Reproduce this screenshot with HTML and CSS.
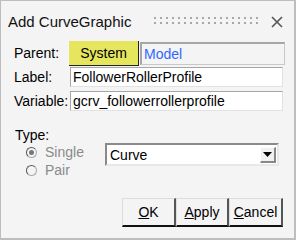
FILE: index.html
```html
<!DOCTYPE html>
<html lang="en">
<head>
    <meta charset="UTF-8">
    <title>Add CurveGraphic</title>
    <link rel="stylesheet" href="styles.css">
</head>
<body>
    <div class="dialog">
        <div class="title-bar">
            <span class="title">Add CurveGraphic</span>
            <span class="grip"></span>
            <svg class="close" width="12" height="12" viewBox="0 0 12 12">
                <path d="M1 1 L11 11 M11 1 L1 11" stroke="#555" stroke-width="1.6" fill="none"/>
            </svg>
        </div>

        <div class="form">
            <div class="row">
                <span class="lbl">Parent:</span>
                <button class="btn-system">System</button>
                <span class="model">Model</span>
            </div>
            <div class="row">
                <span class="lbl">Label:</span>
                <span class="field">FollowerRollerProfile</span>
            </div>
            <div class="row">
                <span class="lbl">Variable:</span>
                <span class="field">gcrv_followerrollerprofile</span>
            </div>
        </div>

        <div class="type-block">
            <div class="type-lbl">Type:</div>
            <div class="type-row">
                <div class="radios">
                    <label class="radio"><span class="dot on"></span>Single</label>
                    <label class="radio"><span class="dot"></span>Pair</label>
                </div>
                <div class="combo">
                    <span class="combo-text">Curve</span>
                    <span class="combo-btn">
                        <svg width="9" height="5" viewBox="0 0 9 5"><path d="M0 0 H9 L4.5 5 Z" fill="#000"/></svg>
                    </span>
                </div>
            </div>
        </div>

        <div class="actions">
            <button class="act"><u>O</u>K</button>
            <button class="act"><u>A</u>pply</button>
            <button class="act"><u>C</u>ancel</button>
        </div>
    </div>
</body>
</html>
```

FILE: styles.css
```css
body {
    margin: 0;
    background: #ffffff;
    font-family: "Liberation Sans", Arial, sans-serif;
    font-size: 14px;
    color: #000;
}

.dialog {
    width: 293px;
    height: 237px;
    background: #f4f4f4;
    border: 2px solid #bdbdbd;
    border-top-width: 1px;
    border-left-width: 1px;
}

.title-bar {
    display: flex;
    align-items: center;
    height: 39px;
    padding: 0 0 0 7px;
}

.title {
    font-size: 15px;
    color: #111;
    margin-top: 1px;
}

.grip {
    width: 108px;
    height: 10px;
    margin-left: 23px;
    margin-top: 3px;
    background-image: linear-gradient(90deg, #a8a8a8 2px, transparent 2px);
    background-size: 6px 5px;
    -webkit-mask-image: linear-gradient(180deg, #000 2px, transparent 2px);
    -webkit-mask-size: 100% 5px;
    mask-image: linear-gradient(180deg, #000 2px, transparent 2px);
    mask-size: 100% 5px;
}

.close {
    margin-left: 9px;
    margin-top: 3px;
}

.form {
    padding: 1px 0 0 13px;
}

.row {
    display: flex;
    align-items: center;
    height: 24px;
}

.lbl {
    width: 55px;
}

.btn-system {
    width: 70px;
    height: 25px;
    margin-top: 1px;
    background: #e6e65e;
    border: none;
    border-right: 1px solid #222;
    border-bottom: 1px solid #222;
    font-family: inherit;
    font-size: 14px;
    padding: 0;
    color: #000;
}

.model {
    width: 140px;
    height: 20px;
    line-height: 20px;
    margin-left: 1px;
    padding-left: 2px;
    border: 1px solid #c8c8c8;
    border-top: 2px solid #a6a6a6;
    border-left: 2px solid #a6a6a6;
    color: #3366ff;
}

.field {
    width: 209px;
    height: 18px;
    line-height: 18px;
    padding-left: 2px;
    margin-left: 1px;
    background: #fff;
    border: 1px solid #e2e2e2;
    border-top: 1px solid #a6a6a6;
    border-left: 1px solid #a6a6a6;
    color: #000;
    white-space: nowrap;
}

.type-block {
    padding: 15px 0 0 14px;
}

.type-lbl {
    height: 15px;
    line-height: 15px;
}

.type-row {
    display: flex;
    align-items: flex-start;
}

.radios {
    display: flex;
    flex-direction: column;
    padding-left: 11px;
    width: 79px;
}

.radio {
    display: flex;
    align-items: center;
    height: 18px;
    color: #8a8a8a;
}

.dot {
    width: 9px;
    height: 9px;
    border-radius: 50%;
    border: 1px solid #aaa;
    border-top-color: #555;
    border-left-color: #555;
    background: #f4f4f4;
    margin-right: 8px;
    position: relative;
}

.dot.on::after {
    content: "";
    position: absolute;
    left: 2px;
    top: 2px;
    width: 5px;
    height: 5px;
    border-radius: 50%;
    background: #777;
}

.combo {
    display: flex;
    align-items: center;
    width: 170px;
    height: 19px;
    background: #fff;
    border: 2px solid #8a8a8a;
    border-right-color: #e8e8e8;
    border-bottom-color: #e8e8e8;
}

.combo-text {
    flex: 1;
    padding-left: 3px;
}

.combo-btn {
    width: 16px;
    height: 16px;
    margin-right: 1px;
    display: flex;
    align-items: center;
    justify-content: center;
    background: #f0f0f0;
    border-right: 2px solid #888;
    border-bottom: 2px solid #888;
    border-top: 1px solid #fff;
    border-left: 1px solid #fff;
    box-sizing: border-box;
}

.actions {
    display: flex;
    justify-content: flex-end;
    padding: 19px 11px 0 0;
}

.act {
    height: 29px;
    padding: 0;
    background: #f4f4f4;
    border: 1px solid #dcdcdc;
    border-right: 2px solid #555;
    border-bottom: 2px solid #111;
    font-family: inherit;
    font-size: 14px;
    color: #000;
}

.act:nth-child(1) { width: 54px; }
.act:nth-child(2) { width: 53px; }
.act:nth-child(3) { width: 54px; }
```
